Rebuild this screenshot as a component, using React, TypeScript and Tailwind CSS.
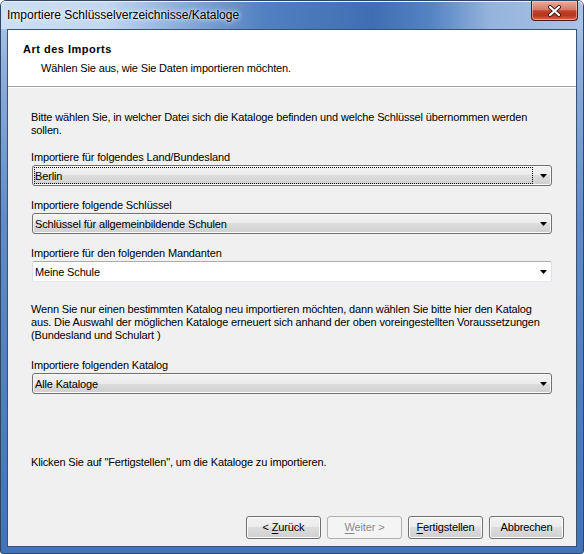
import React from "react";

function Arrow() {
  return (
    <svg width="7" height="4" viewBox="0 0 7 4" className="block">
      <path d="M0 0 H7 L3.5 4 Z" fill="#000" />
    </svg>
  );
}

function Combo({ value, focused = false, editable = false }: { value: string; focused?: boolean; editable?: boolean }) {
  const base = editable
    ? "border-t-[#abadb3] border-x-[#dbdfe6] border-b-[#e3e9ef] bg-white rounded-[2px]"
    : "border-[#707070] rounded-[3px] bg-[linear-gradient(to_bottom,#f2f2f2_0%,#ebebeb_50%,#dddddd_50%,#cfcfcf_100%)] shadow-[inset_0_0_0_1px_#fafafa]";
  return (
    <div className={`flex items-center h-[21px] w-[520px] border ${base}`}>
      <div
        className={`flex-1 h-[17px] ml-px flex items-center border ${
          focused ? "border-dotted border-black" : "border-transparent"
        }`}
      >
        <span className="leading-[13px] pt-px">{value}</span>
      </div>
      <div className="w-[18px] flex justify-center pl-[3px]">
        <Arrow />
      </div>
    </div>
  );
}

function Btn({ children, disabled = false }: { children: React.ReactNode; disabled?: boolean }) {
  return (
    <div
      className={`w-[75px] h-[23px] flex items-center justify-center rounded-[3px] border ${
        disabled
          ? "border-[#adb2b5] bg-[#f4f4f4] text-[#8b8b8b]"
          : "border-[#707070] bg-[linear-gradient(to_bottom,#f2f2f2_0%,#ebebeb_50%,#dddddd_50%,#cfcfcf_100%)] shadow-[inset_0_0_0_1px_#fcfcfc] text-black"
      }`}
    >
      <span className="whitespace-pre leading-[13px] pb-px">{children}</span>
    </div>
  );
}

export default function App() {
  return (
    <div className="w-[584px] h-[554px] bg-white">
      <div className="relative w-[584px] h-[554px] flex flex-col rounded-t-[6px] rounded-b-[3px] border border-[#2f4566] bg-[linear-gradient(to_bottom,#b6cdea_0%,#8eafdc_12%,#5f8bc8_40%,#4273b8_100%)] font-['Liberation_Sans',Arial,sans-serif] text-[11px] text-black">
        {/* title bar */}
        <div className="h-[28px] flex items-center pl-[6px] rounded-t-[5px] bg-[linear-gradient(to_right,#cddff3_0%,#c2d7f0_18%,#86a9d9_32%,#5281c1_45%,#3f6eb3_64%,#5584c3_74%,#95b3dd_84%,#a9c3e5_100%)] shadow-[inset_0_1px_0_#e8f0fa]">
          <span className="text-[12px] leading-[14px] text-black pb-[1px] [text-shadow:0_0_6px_#ffffff,0_0_3px_#ffffff]">
            Importiere Schlüsselverzeichnisse/Kataloge
          </span>
        </div>
        {/* close button */}
        <div className="absolute top-0 right-[5px] w-[47px] h-[20px] rounded-b-[4px] border border-t-0 border-[#4a1f18] bg-[linear-gradient(to_bottom,#e9ad9d_0%,#d67a66_45%,#c2432c_52%,#b7321c_75%,#d9694d_100%)] shadow-[inset_0_0_0_1px_rgba(255,220,210,0.5)] flex items-center justify-center">
          <svg width="13" height="12" viewBox="0 0 13 12">
            <path d="M2 2 L11 10 M11 2 L2 10" stroke="#3a1a14" strokeWidth="4" strokeLinecap="round" />
            <path d="M2 2 L11 10 M11 2 L2 10" stroke="#ffffff" strokeWidth="2.2" strokeLinecap="round" />
          </svg>
        </div>
        {/* client area */}
        <div className="flex-1 mx-[6px] mb-[6px] flex flex-col border border-[#3a5173] bg-[#f0f0f0] tracking-[-0.15px]">
          <div className="h-[57px] bg-white border-b border-[#a0a0a0] pt-[13px] pl-[15px] flex flex-col">
            <div className="font-bold leading-[13px] tracking-[0.5px]">Art des Imports</div>
            <div className="leading-[13px] mt-[6px] pl-[18px]">Wählen Sie aus, wie Sie Daten importieren möchten.</div>
          </div>
          <div className="flex-1 flex flex-col pl-[24px] pr-[24px] pt-[23px] pb-[7px] border-t border-white">
            <div className="leading-[13px] -ml-px whitespace-nowrap">
              Bitte wählen Sie, in welcher Datei sich die Kataloge befinden und welche Schlüssel übernommen werden
              <br />
              sollen.
            </div>
            <div className="leading-[13px] -ml-px mt-[14px]">Importiere für folgendes Land/Bundesland</div>
            <div className="mt-[1px]">
              <Combo value="Berlin" focused />
            </div>
            <div className="leading-[13px] -ml-px mt-[13px]">Importiere folgende Schlüssel</div>
            <div className="mt-[1px]">
              <Combo value="Schlüssel für allgemeinbildende Schulen" />
            </div>
            <div className="leading-[13px] -ml-px mt-[13px]">Importiere für den folgenden Mandanten</div>
            <div className="mt-[1px]">
              <Combo value="Meine Schule" editable />
            </div>
            <div className="leading-[13px] -ml-px mt-[21px] whitespace-nowrap">
              Wenn Sie nur einen bestimmten Katalog neu importieren möchten, dann wählen Sie bitte hier den Katalog
              <br />
              aus. Die Auswahl der möglichen Kataloge erneuert sich anhand der oben voreingestellten Voraussetzungen
              <br />
              (Bundesland und Schulart )
            </div>
            <div className="leading-[13px] -ml-px mt-[17px]">Importiere folgenden Katalog</div>
            <div className="mt-[1px]">
              <Combo value="Alle Kataloge" />
            </div>
            <div className="leading-[13px] -ml-px mt-[62px]">
              Klicken Sie auf "Fertigstellen", um die Kataloge zu importieren.
            </div>
            <div className="flex-1" />
            <div className="flex justify-end gap-[6px] -mr-[12px]">
              <Btn>
                {"< "}
                <span className="underline underline-offset-[2px]">Z</span>urück
              </Btn>
              <Btn disabled>
                <span className="underline underline-offset-[2px]">W</span>
                {"eiter >"}
              </Btn>
              <Btn>
                <span className="underline underline-offset-[2px]">F</span>ertigstellen
              </Btn>
              <Btn>Abbrechen</Btn>
            </div>
          </div>
        </div>
      </div>
    </div>
  );
}
